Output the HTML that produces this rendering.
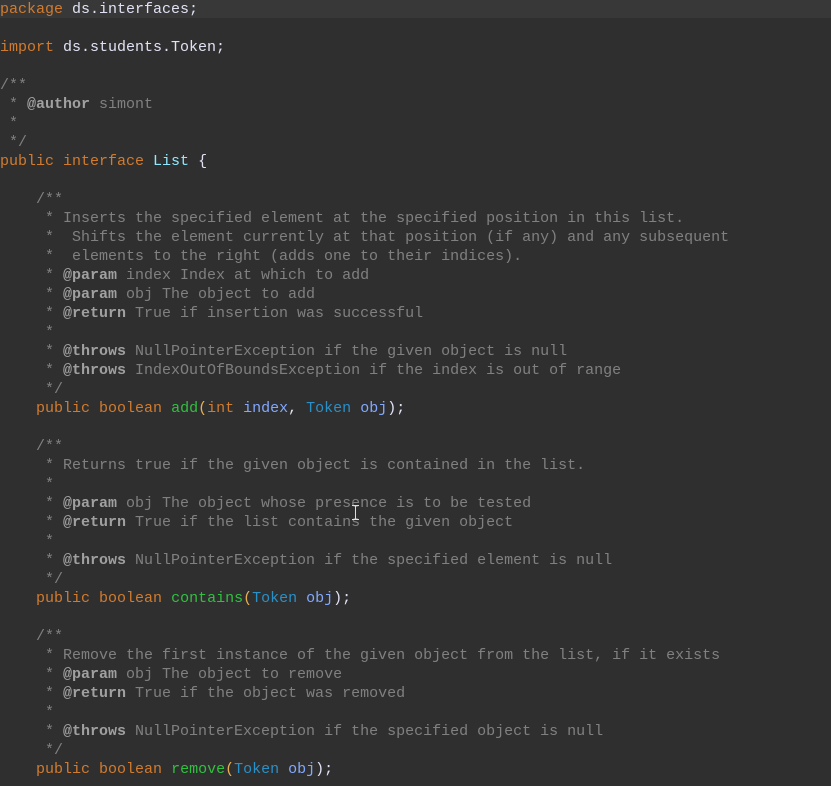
<!DOCTYPE html>
<html><head><meta charset="utf-8"><style>
html,body{margin:0;padding:0;background:#2f2f2f;width:831px;height:786px;overflow:hidden}
pre{margin:0;position:absolute;top:0;left:0;font-family:"Liberation Mono",monospace;font-size:15px;line-height:19px;color:#e0e2f4;white-space:pre}
.hl{position:absolute;left:0;top:0;width:831px;height:18px;background:#383838}
.k{color:#d27b2d}.c{color:#808080}.t{color:#a0a0a0;font-weight:bold}.g{color:#30c040}.ty{color:#2a90c8}.v{color:#82a8ff}.cl{color:#8fe8ff}.p{color:#e8b050}
.cur{position:absolute;left:355px;top:505px;width:1px;height:15px;background:#ddd}
.cur:before,.cur:after{content:"";position:absolute;left:-3px;width:7px;height:1px;background:#ddd}
.cur:before{top:0}.cur:after{bottom:0}
</style></head><body>
<div class="hl"></div>
<pre><span class="k">package</span> ds.interfaces;

<span class="k">import</span> ds.students.Token;

<span class="c">/**
 * <span class="t">@author</span> simont
 *
 */</span>
<span class="k">public interface</span> <span class="cl">List</span> {

    <span class="c">/**
     * Inserts the specified element at the specified position in this list.
     *  Shifts the element currently at that position (if any) and any subsequent
     *  elements to the right (adds one to their indices).
     * <span class="t">@param</span> index Index at which to add
     * <span class="t">@param</span> obj The object to add
     * <span class="t">@return</span> True if insertion was successful
     *
     * <span class="t">@throws</span> NullPointerException if the given object is null
     * <span class="t">@throws</span> IndexOutOfBoundsException if the index is out of range
     */</span>
    <span class="k">public boolean</span> <span class="g">add</span><span class="p">(</span><span class="k">int</span> <span class="v">index</span>, <span class="ty">Token</span> <span class="v">obj</span>);

    <span class="c">/**
     * Returns true if the given object is contained in the list.
     *
     * <span class="t">@param</span> obj The object whose presence is to be tested
     * <span class="t">@return</span> True if the list contains the given object
     *
     * <span class="t">@throws</span> NullPointerException if the specified element is null
     */</span>
    <span class="k">public boolean</span> <span class="g">contains</span><span class="p">(</span><span class="ty">Token</span> <span class="v">obj</span>);

    <span class="c">/**
     * Remove the first instance of the given object from the list, if it exists
     * <span class="t">@param</span> obj The object to remove
     * <span class="t">@return</span> True if the object was removed
     *
     * <span class="t">@throws</span> NullPointerException if the specified object is null
     */</span>
    <span class="k">public boolean</span> <span class="g">remove</span><span class="p">(</span><span class="ty">Token</span> <span class="v">obj</span>);
</pre>
<div class="cur"></div>
</body></html>
